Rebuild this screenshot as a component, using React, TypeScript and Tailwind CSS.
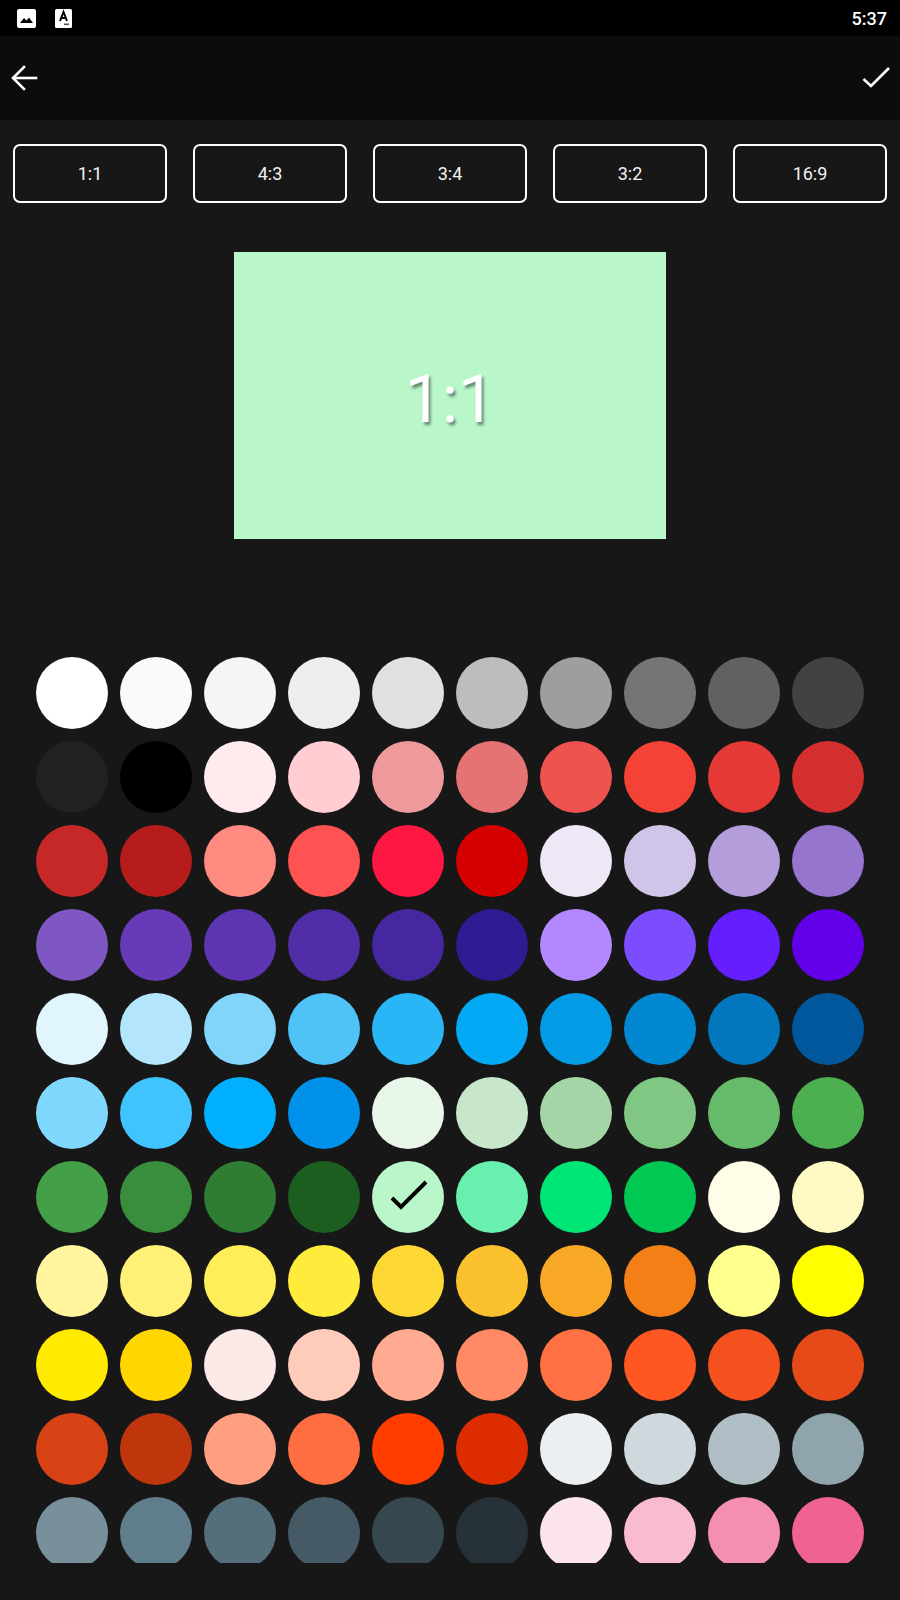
import React, { useState } from 'react'

const RATIOS = ['1:1', '4:3', '3:4', '3:2', '16:9']

const COLORS = [
  '#ffffff', '#fafafa', '#f5f5f5', '#eeeeee', '#e0e0e0', '#bdbdbd', '#9e9e9e', '#757575', '#616161', '#424242',
  '#212121', '#000000', '#ffebee', '#ffcdd2', '#ef9a9a', '#e57373', '#ef5350', '#f44336', '#e53935', '#d32f2f',
  '#c62828', '#b71c1c', '#ff8a80', '#ff5252', '#ff1744', '#d50000', '#ede7f6', '#d1c4e9', '#b39ddb', '#9575cd',
  '#7e57c2', '#673ab7', '#5e35b1', '#512da8', '#4527a0', '#311b92', '#b388ff', '#7c4dff', '#651fff', '#6200ea',
  '#e1f5fe', '#b3e5fc', '#81d4fa', '#4fc3f7', '#29b6f6', '#03a9f4', '#039be5', '#0288d1', '#0277bd', '#01579b',
  '#80d8ff', '#40c4ff', '#00b0ff', '#0091ea', '#e8f5e9', '#c8e6c9', '#a5d6a7', '#81c784', '#66bb6a', '#4caf50',
  '#43a047', '#388e3c', '#2e7d32', '#1b5e20', '#b9f6ca', '#69f0ae', '#00e676', '#00c853', '#fffde7', '#fff9c4',
  '#fff59d', '#fff176', '#ffee58', '#ffeb3b', '#fdd835', '#fbc02d', '#f9a825', '#f57f17', '#ffff8d', '#ffff00',
  '#ffea00', '#ffd600', '#fbe9e7', '#ffccbc', '#ffab91', '#ff8a65', '#ff7043', '#ff5722', '#f4511e', '#e64a19',
  '#d84315', '#bf360c', '#ff9e80', '#ff6e40', '#ff3d00', '#dd2c00', '#eceff1', '#cfd8dc', '#b0bec5', '#90a4ae',
  '#78909c', '#607d8b', '#546e7a', '#455a64', '#37474f', '#263238', '#fce4ec', '#f8bbd0', '#f48fb1', '#f06292',
]

function StatusBar() {
  return (
    <div className="h-9 bg-black flex items-center justify-between pl-[17px] pr-[13px]">
      <div className="flex items-center gap-[19px]">
        {/* gallery icon */}
        <svg width="19" height="19" viewBox="0 0 19 19">
          <rect x="0" y="0" width="19" height="19" rx="2" fill="#fff" />
          <path d="M3 14 L7 9 L9.5 11.5 L12 8.5 L16 14 Z" fill="#000" />
        </svg>
        {/* font/A icon */}
        <svg width="17" height="19" viewBox="0 0 17 19">
          <rect x="0" y="0" width="17" height="19" rx="1.5" fill="#fff" />
          <path d="M5 12 L8.5 3 L12 12 M6.2 9 H10.8" stroke="#000" strokeWidth="2" fill="none" />
          <rect x="9" y="14.5" width="5" height="1.6" fill="#555" />
        </svg>
      </div>
      <span className="text-white text-[18px] font-medium" style={{ fontFamily: 'Roboto, sans-serif' }}>5:37</span>
    </div>
  )
}

function Toolbar() {
  return (
    <div className="h-[84px] bg-[#0c0c0c] flex items-center justify-between pl-[6px] pr-[6px]">
      <button type="button" aria-label="Back" className="w-9 h-9 flex items-center justify-center">
        <svg width="36" height="36" viewBox="0 0 36 36" fill="none" stroke="#fff" strokeWidth="2.6" strokeLinecap="square">
          <polyline points="18,7 7,18 18,29" />
          <line x1="8" y1="18" x2="30" y2="18" />
        </svg>
      </button>
      <button type="button" aria-label="Done" className="w-9 h-9 flex items-center justify-center">
        <svg width="36" height="36" viewBox="0 0 36 36" fill="none" stroke="#fff" strokeWidth="2.6">
          <polyline points="5.5,19 13,26 31,8" />
        </svg>
      </button>
    </div>
  )
}

export default function App() {
  const [ratio, setRatio] = useState('1:1')
  const [selected, setSelected] = useState(64)

  return (
    <div className="w-[900px] h-[1600px] bg-[#171717] flex flex-col overflow-hidden" style={{ fontFamily: 'Roboto, "Liberation Sans", sans-serif' }}>
      <StatusBar />
      <Toolbar />

      <div className="flex gap-[26px] px-[13px] mt-6">
        {RATIOS.map((r) => (
          <button
            key={r}
            type="button"
            onClick={() => setRatio(r)}
            className="flex-1 h-[59px] rounded-[7px] border-2 border-white text-[#f2f2f2] text-[18px] flex items-center justify-center"
          >
            {r}
          </button>
        ))}
      </div>

      <div className="flex justify-center mt-[49px]">
        <div
          className="w-[432px] h-[287px] flex items-center justify-center"
          style={{ backgroundColor: COLORS[selected] }}
        >
          <span className="text-white text-[66px] leading-none mt-2 [text-shadow:2px_3px_3px_rgba(0,0,0,0.45)]">
            {ratio}
          </span>
        </div>
      </div>

      <div className="mt-[118px] h-[906px] overflow-hidden px-9">
        <div className="grid grid-cols-10 gap-3">
          {COLORS.map((c, i) => (
            <button
              key={c + i}
              type="button"
              onClick={() => setSelected(i)}
              className="w-[72px] h-[72px] rounded-full flex items-center justify-center"
              style={{ backgroundColor: c }}
            >
              {i === selected && (
                <svg width="48" height="48" viewBox="0 0 48 48" fill="none" stroke="#000" strokeWidth="4">
                  <polyline points="8,25 17,34 42,9" />
                </svg>
              )}
            </button>
          ))}
        </div>
      </div>
    </div>
  )
}
